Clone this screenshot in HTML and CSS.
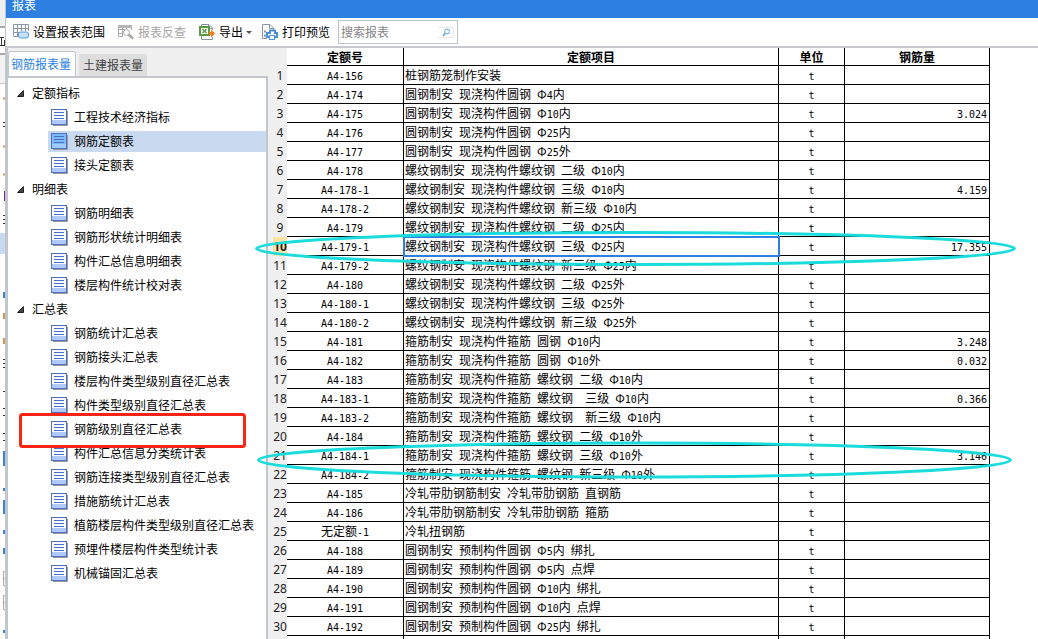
FILE: index.html
```html
<!DOCTYPE html>
<html lang="zh-CN">
<head>
<meta charset="utf-8">
<title>报表</title>
<link rel="stylesheet" href="styles.css">
</head>
<body>
<svg class="defs" width="0" height="0" aria-hidden="true">
  <symbol id="doc" viewBox="0 0 17 17">
    <path d="M2 16.5H16.5V2" fill="none" stroke="#999" />
    <rect x=".5" y=".5" width="15" height="15" fill="var(--paper, #f7f9ff)" stroke="#4a6fc4"/>
    <rect x="1" y="11" width="14" height="4" fill="var(--foot, #b4c9fb)"/>
    <path d="M3 3.5H13M3 6.5H13M3 9.5H13" stroke="#4a6fc4"/>
  </symbol>
</svg>
<div class="desktop">
  <aside class="behind" aria-hidden="true">
    <svg width="5" height="639">
      <rect width="5" height="26" fill="#eef0f2"/>
      <rect y="26" width="5" height="2" fill="#a5a8ad"/>
      <rect y="53" width="5" height="2" fill="#a5a8ad"/>
      <rect y="55" width="5" height="28" fill="#f2f2f2"/>
      <path d="M0 83.500H5" stroke="#c6c9ce"/>
      <rect y="233" width="5" height="21" fill="#c9d9f0"/>
      <path d="M0 37.500H4M0 45.500H5M1.500 38V46M4.500 40V46M3 122.500H5M3 126.500H5M3 215.500H5M3 219.500H5M3 223.500H5M3 359.500H5M3 363.500H5M3 367.500H5M3 391.500H5M3 408.500H5M3 415.500H5M3 433.500H5M3 440.500H5" stroke="#333"/>
      <path d="M3 98.500H5M3 146.500H5M3 174.500H5M4 313V319M4 338V344" stroke="#d9964a" stroke-width="2"/>
      <path d="M4.500 191V201" stroke="#8d1d94"/>
      <path d="M4 292V298M4 451V466M4 488V491M4 500V514M4 530V534M4 548V554M4 630V633" stroke="#3f83d5" stroke-width="2"/>
      <path d="M5 571.500H3.500V585.500H5M3 578.500H5M5 595.500H3.500V609.500H5M3 602.500H5" fill="none" stroke="#aaa"/>
    </svg>
  </aside>
  <main class="window">
    <header class="title">报表</header>
    <div class="toolbar">
      <button class="tool range" type="button">
        <svg width="17" height="16" viewBox="0 0 17 16" fill="none"><path d="M.5 12V.5H15.500V7M.5 4.500H15.500M.5 8.500H6M.5 12.500H5M4.500 1V12M8.500 1V7M12.500 1V7" stroke="#8997a6"/><rect x="5.500" y="8" width="10" height="6" rx="2" fill="#c7e0fb" stroke="#5b9bdc"/></svg>
        设置报表范围</button>
      <button class="tool check" type="button" disabled>
        <svg width="17" height="16" viewBox="0 0 17 16" fill="none"><path d="M.5 12.500V1.500H13.500V6M.5 5.500H7M.5 9.500H5M.5 12.500H5M4.500 2V12M8.500 2V5" stroke="#aaa"/><path d="M0 1H14V4H0Z" fill="#b5b5b5"/><circle cx="8.500" cy="8.500" r="3" fill="#fff" stroke="#aaa"/><path d="M10.500 10.500L15 14.500" stroke="#aaa" stroke-width="3"/></svg>
        报表反查</button>
      <button class="tool export" type="button">
        <svg width="17" height="17" viewBox="0 0 17 17" fill="none"><path d="M2.500 3V.5H10L13.500 4V6M2.500 12V15.500H13.500V13" stroke="#8797a7"/><path d="M9.500 1V4.500H13" stroke="#8797a7"/><rect x="1" y="3" width="9" height="8" fill="#fff" stroke="#5b9b44" stroke-width="2"/><path d="M3.500 5L7.500 9M7.500 5L3.500 9" stroke="#5b9b44" stroke-width="1.500"/><path d="M10 8H12V5.500L16 9.500L12 13.500V11H10Z" fill="#f37a1c"/></svg>
        导出<span class="caret"></span></button>
      <button class="tool print" type="button">
        <svg width="17" height="16" viewBox="0 0 17 16" fill="none"><path d="M11.500 6V4L8 .5H.5V14.500H5M7.500 1V4.500H11" stroke="#8797a7"/><path d="M2 7.500H4M2 11.500H4" stroke="#8797a7" stroke-width="2"/><path d="M8 6.500H13V9H15V13H5V9H8Z" fill="#fff" stroke="#4a93dc" stroke-width="2"/><rect x="7.500" y="11.500" width="5" height="4" fill="#fff" stroke="#4a93dc"/></svg>
        打印预览</button>
      <label class="search">
        <input type="text" placeholder="搜索报表" aria-label="搜索报表">
        <svg width="16" height="11" viewBox="0 0 16 11" fill="none"><path d="M0 .5H15.500V10.500H0" stroke="#e9e9e9"/><circle cx="9" cy="4.500" r="2.500" stroke="#5ba0e0"/><path d="M7 6.500L5 9" stroke="#5ba0e0" stroke-width="1.500"/></svg>
      </label>
    </div>
    <div class="content">
      <section class="side">
        <div class="tabs" role="tablist">
          <button class="tab active" type="button" role="tab" aria-selected="true">钢筋报表量</button>
          <button class="tab" type="button" role="tab" aria-selected="false">土建报表量</button>
        </div>
        <nav class="tree" id="tree"></nav>
      </section>
      <section class="sheet">
        <table>
          <colgroup><col class="c-num"><col class="c-code"><col class="c-item"><col class="c-unit"><col class="c-qty"></colgroup>
          <thead><tr><th class="num"></th><th class="code">定额号</th><th class="item">定额项目</th><th class="unit">单位</th><th class="qty">钢筋量</th></tr></thead>
          <tbody id="rows"></tbody>
        </table>
      </section>
    </div>
  </main>
  <svg class="marks" width="1038" height="639" fill="none" aria-hidden="true">
    <rect x="20.500" y="414.500" width="224" height="32" rx="2" stroke="#fa2414" stroke-width="3"/>
    <ellipse cx="635.500" cy="248.500" rx="379" ry="16" stroke="#1bdcdc" stroke-width="3"/>
    <ellipse cx="634.500" cy="460" rx="376" ry="17" stroke="#1bdcdc" stroke-width="3"/>
  </svg>
</div>
<script src="script.js"></script>
</body>
</html>
```
FILE: styles.css
```css
* { box-sizing: border-box; }
body {
  margin: 0;
  overflow: hidden;
  color: #000;
  background: #fff;
  font: 12px/18px "Noto Sans CJK SC", sans-serif;
}
button, input { font: inherit; color: inherit; }
.defs { position: absolute; }
.desktop { position: relative; display: flex; height: 100vh; overflow: hidden; }
.behind { flex: none; width: 5px; overflow: hidden; }
.behind svg { display: block; }
.window { flex: 1; min-width: 0; display: flex; flex-direction: column; border-left: 1px solid #c1c5cd; }
.title {
  flex: none;
  height: 18px;
  padding-left: 6px;
  background: #2d7fe1;
  color: #fff;
  line-height: 9px;
}
.toolbar {
  flex: none;
  display: flex;
  align-items: center;
  height: 30px;
  padding-left: 2px;
  border-bottom: 2px solid #c8c8d0;
  background: #fff;
}
.tool {
  flex: none;
  display: flex;
  align-items: center;
  gap: 3px;
  height: 22px;
  padding: 0 5px;
  border: 0;
  background: none;
  white-space: nowrap;
}
.tool svg { flex: none; }
.check, .export, .search { margin-left: 3px; }
.tool:disabled { color: #a6a6a6; }
.caret { border: 3px solid transparent; border-top-color: #555; border-bottom: 0; }
.search {
  display: flex;
  align-items: center;
  width: 120px;
  height: 24px;
  padding: 0 3px 0 2px;
  border: 1px solid #bcc4ca;
}
.search input { flex: 1; min-width: 0; padding: 0; border: 0; outline: 0; background: none; }
.search input::placeholder { color: #858585; opacity: 1; }
.content { flex: 1; min-height: 0; display: flex; background: #f0f0f0; }
.side {
  flex: none;
  display: flex;
  flex-direction: column;
  width: 262px;
  border-left: 2px solid #c1c5cd;
}
.tabs { flex: none; display: flex; align-items: flex-end; gap: 3px; height: 28px; }
.tab {
  height: 22px;
  padding: 0 4px;
  border: 0;
  border-radius: 3px 3px 0 0;
  background: #dedede;
  color: #444;
}
.tab.active {
  height: 25px;
  padding: 0 4px 0 2px;
  border: 1px solid #c1c5cd;
  border-bottom: 0;
  background: #fff;
  color: #2d7fe1;
}
.tree {
  flex: 1;
  min-height: 0;
  overflow: hidden;
  padding-top: 3px;
  border: solid #c1c7cd;
  border-width: 2px 2px 0 0;
  background: #fff;
}
.tree h2 {
  display: flex;
  align-items: center;
  gap: 8px;
  height: 24px;
  margin: 0;
  padding-left: 9px;
  font-size: 12px;
  font-weight: 400;
}
.tree ul { margin: 0; padding: 0 0 0 40px; list-style: none; }
.tree li { height: 24px; display: flex; align-items: center; }
.tree a {
  flex: 1;
  display: flex;
  align-items: center;
  gap: 6px;
  height: 21px;
  padding-left: 3px;
  color: inherit;
  text-decoration: none;
  white-space: nowrap;
}
.tree a.selected { --paper: #7db8f7; --foot: #9fcbfa; background: #c9daf0; }
.sheet { flex: 1; min-width: 0; overflow: hidden; margin-left: 5px; background: #fff; }
table { width: 717px; table-layout: fixed; border-collapse: separate; border-spacing: 0; }
.c-num { width: 14px; }
.c-code { width: 117px; }
.c-item { width: 375px; }
.c-unit { width: 66px; }
.c-qty { width: 145px; }
th, td {
  height: 19px;
  padding: 0;
  border: solid #000;
  border-width: 0 1px 1px 0;
  line-height: 16px;
  text-align: center;
  vertical-align: middle;
  white-space: nowrap;
}
thead th { height: 18px; }
th.num {
  border: 0;
  background: #f0f0f0;
  color: #222;
  font: 12px/18px "Noto Sans", sans-serif;
}
.num span { display: flex; justify-content: center; }
.active .num { background: #fde3a4; font-weight: 700; }
tbody .item { padding-left: 1px; text-align: left; }
tbody .qty { padding-right: 2px; text-align: right; }
.latin { font: 10px/12px "DejaVu Sans Mono", monospace; }
.active .item { outline: 2px solid #2d7fe1; outline-offset: -1px; }
.marks { position: absolute; top: 0; left: 0; pointer-events: none; }
```
FILE: script.js
```js
const groups = [
  ["定额指标", ["工程技术经济指标", "钢筋定额表", "接头定额表"]],
  ["明细表", ["钢筋明细表", "钢筋形状统计明细表", "构件汇总信息明细表", "楼层构件统计校对表"]],
  ["汇总表", ["钢筋统计汇总表", "钢筋接头汇总表", "楼层构件类型级别直径汇总表", "构件类型级别直径汇总表",
    "钢筋级别直径汇总表", "构件汇总信息分类统计表", "钢筋连接类型级别直径汇总表", "措施筋统计汇总表",
    "植筋楼层构件类型级别直径汇总表", "预埋件楼层构件类型统计表", "机械锚固汇总表"]]
];

const rows = [
  ["A4-156", "桩钢筋笼制作安装"],
  ["A4-174", "圆钢制安 现浇构件圆钢 Φ4内"],
  ["A4-175", "圆钢制安 现浇构件圆钢 Φ10内", "3.024"],
  ["A4-176", "圆钢制安 现浇构件圆钢 Φ25内"],
  ["A4-177", "圆钢制安 现浇构件圆钢 Φ25外"],
  ["A4-178", "螺纹钢制安 现浇构件螺纹钢 二级 Φ10内"],
  ["A4-178-1", "螺纹钢制安 现浇构件螺纹钢 三级 Φ10内", "4.159"],
  ["A4-178-2", "螺纹钢制安 现浇构件螺纹钢 新三级 Φ10内"],
  ["A4-179", "螺纹钢制安 现浇构件螺纹钢 二级 Φ25内"],
  ["A4-179-1", "螺纹钢制安 现浇构件螺纹钢 三级 Φ25内", "17.355"],
  ["A4-179-2", "螺纹钢制安 现浇构件螺纹钢 新三级 Φ25内"],
  ["A4-180", "螺纹钢制安 现浇构件螺纹钢 二级 Φ25外"],
  ["A4-180-1", "螺纹钢制安 现浇构件螺纹钢 三级 Φ25外"],
  ["A4-180-2", "螺纹钢制安 现浇构件螺纹钢 新三级 Φ25外"],
  ["A4-181", "箍筋制安 现浇构件箍筋 圆钢 Φ10内", "3.248"],
  ["A4-182", "箍筋制安 现浇构件箍筋 圆钢 Φ10外", "0.032"],
  ["A4-183", "箍筋制安 现浇构件箍筋 螺纹钢 二级 Φ10内"],
  ["A4-183-1", "箍筋制安 现浇构件箍筋 螺纹钢  三级 Φ10内", "0.366"],
  ["A4-183-2", "箍筋制安 现浇构件箍筋 螺纹钢  新三级 Φ10内"],
  ["A4-184", "箍筋制安 现浇构件箍筋 螺纹钢 二级 Φ10外"],
  ["A4-184-1", "箍筋制安 现浇构件箍筋 螺纹钢 三级 Φ10外", "3.146"],
  ["A4-184-2", "箍筋制安 现浇构件箍筋 螺纹钢 新三级 Φ10外"],
  ["A4-185", "冷轧带肋钢筋制安 冷轧带肋钢筋 直钢筋"],
  ["A4-186", "冷轧带肋钢筋制安 冷轧带肋钢筋 箍筋"],
  ["无定额-1", "冷轧扭钢筋"],
  ["A4-188", "圆钢制安 预制构件圆钢 Φ5内 绑扎"],
  ["A4-189", "圆钢制安 预制构件圆钢 Φ5内 点焊"],
  ["A4-190", "圆钢制安 预制构件圆钢 Φ10内 绑扎"],
  ["A4-191", "圆钢制安 预制构件圆钢 Φ10内 点焊"],
  ["A4-192", "圆钢制安 预制构件圆钢 Φ25内 绑扎"]
];

// Half-width characters take exactly half of a Chinese character's width.
const half = text => text.replace(/[\x20-\x7e]+/g, run =>
  `<span class="latin">${run.replace(/ /g, "&nbsp;")}</span>`);

document.getElementById("tree").innerHTML = groups.map(([name, items]) => `
  <h2><svg width="7" height="7"><path d="M6.500 .5V6.500H.5Z" fill="#444" stroke="#222"/></svg>${name}</h2>
  <ul>${items.map(item => `<li><a href="#"${item === "钢筋定额表" ? ' class="selected"' : ""}>
    <svg width="17" height="17"><use href="#doc"/></svg>${item}</a></li>`).join("")}</ul>`).join("");

document.getElementById("rows").innerHTML = rows.map(([code, item, qty = ""], i) => `
  <tr${i === 9 ? ' class="active"' : ""}><th class="num"><span>${i + 1}</span></th>
  <td class="code">${half(code)}</td><td class="item">${half(item)}</td>
  <td class="unit">${half("t")}</td><td class="qty">${half(qty)}</td></tr>`).join("") +
  '<tr><th class="num"></th><td></td><td></td><td></td><td></td></tr>';
```
